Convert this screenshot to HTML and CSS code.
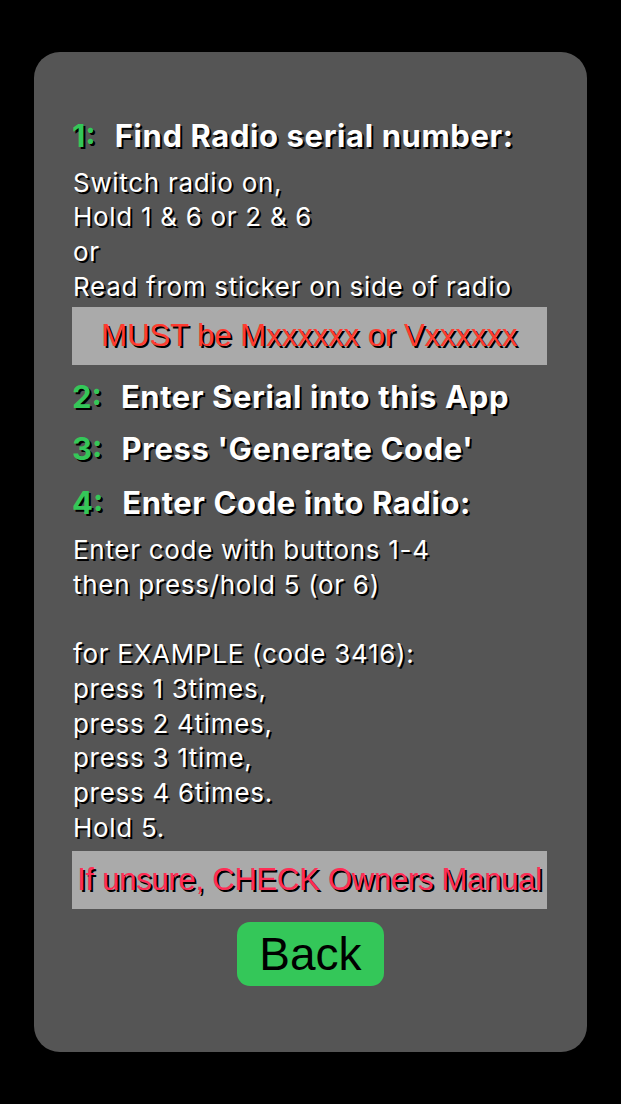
FILE: index.html
```html
<!DOCTYPE html>
<html>
<head>
<meta charset="utf-8">
<link rel="stylesheet" href="styles.css">
</head>
<body>
<div class="card">
  <h2 class="step first"><span class="num">1:</span><span class="title">Find Radio serial number:</span></h2>
  <p class="body">Switch radio on,<br>Hold 1 &amp; 6 or 2 &amp; 6<br>or<br>Read from sticker on side of radio</p>
  <div class="note must">MUST be Mxxxxxx or Vxxxxxx</div>
  <h2 class="step s2"><span class="num">2:</span><span class="title">Enter Serial into this App</span></h2>
  <h2 class="step s3"><span class="num">3:</span><span class="title">Press 'Generate Code'</span></h2>
  <h2 class="step s4"><span class="num">4:</span><span class="title">Enter Code into Radio:</span></h2>
  <p class="body">Enter code with buttons 1-4<br>then press/hold 5 (or 6)<br><br>for EXAMPLE (code 3416):<br>press 1 3times,<br>press 2 4times,<br>press 3 1time,<br>press 4 6times.<br>Hold 5.</p>
  <div class="note unsure">If unsure, CHECK Owners Manual</div>
  <div class="actions"><button class="back">Back</button></div>
</div>
</body>
</html>
```
FILE: styles.css
```css
html, body {
  margin: 0;
  padding: 0;
  background: #000;
}
body {
  width: 621px;
  height: 1104px;
  overflow: hidden;
  font-family: Inter, "Liberation Sans", sans-serif;
}
.card {
  margin: 52px 0 0 34px;
  width: 553px;
  height: 1000px;
  box-sizing: border-box;
  background: #555555;
  border-radius: 26px;
  padding: 66px 40px 0 38px;
}
.step {
  margin: 0;
  display: flex;
  gap: 19px;
  font-size: 31px;
  font-weight: 700;
  line-height: 36px;
  color: #fff;
  text-shadow: 2px 2px 0 #000;
  letter-spacing: 0.6px;
  white-space: nowrap;
}
.step .num {
  color: #34c759;
  letter-spacing: 0;
}
.s2 { margin-top: 14px; }
.s3 { margin-top: 16px; }
.s4 { margin-top: 18px; }
.body {
  margin: 11.6px 0 0 1px;
  font-size: 26px;
  line-height: 34.7px;
  color: #fff;
  text-shadow: 2px 2px 0 #000;
  letter-spacing: 0.7px;
  white-space: nowrap;
}
.note {
  background: #aaaaaa;
  height: 58px;
  display: flex;
  align-items: center;
  justify-content: center;
  font-family: "Liberation Sans", Arial, sans-serif;
  text-shadow: 2px 2px 0 #000;
  white-space: nowrap;
  font-size: 31px;
}
.must {
  margin-top: 3px;
  color: #ff3b30;
}
.unsure {
  margin-top: 6px;
  color: #ff2d55;
  letter-spacing: -0.25px;
}
.actions {
  display: flex;
  justify-content: center;
  margin: 13px 0 0 2px;
}
.back {
  width: 147px;
  height: 64px;
  background: #34c759;
  border: none;
  border-radius: 13px;
  font-family: "Liberation Sans", Arial, sans-serif;
  font-size: 46px;
  color: #000;
  padding: 0;
}
```
